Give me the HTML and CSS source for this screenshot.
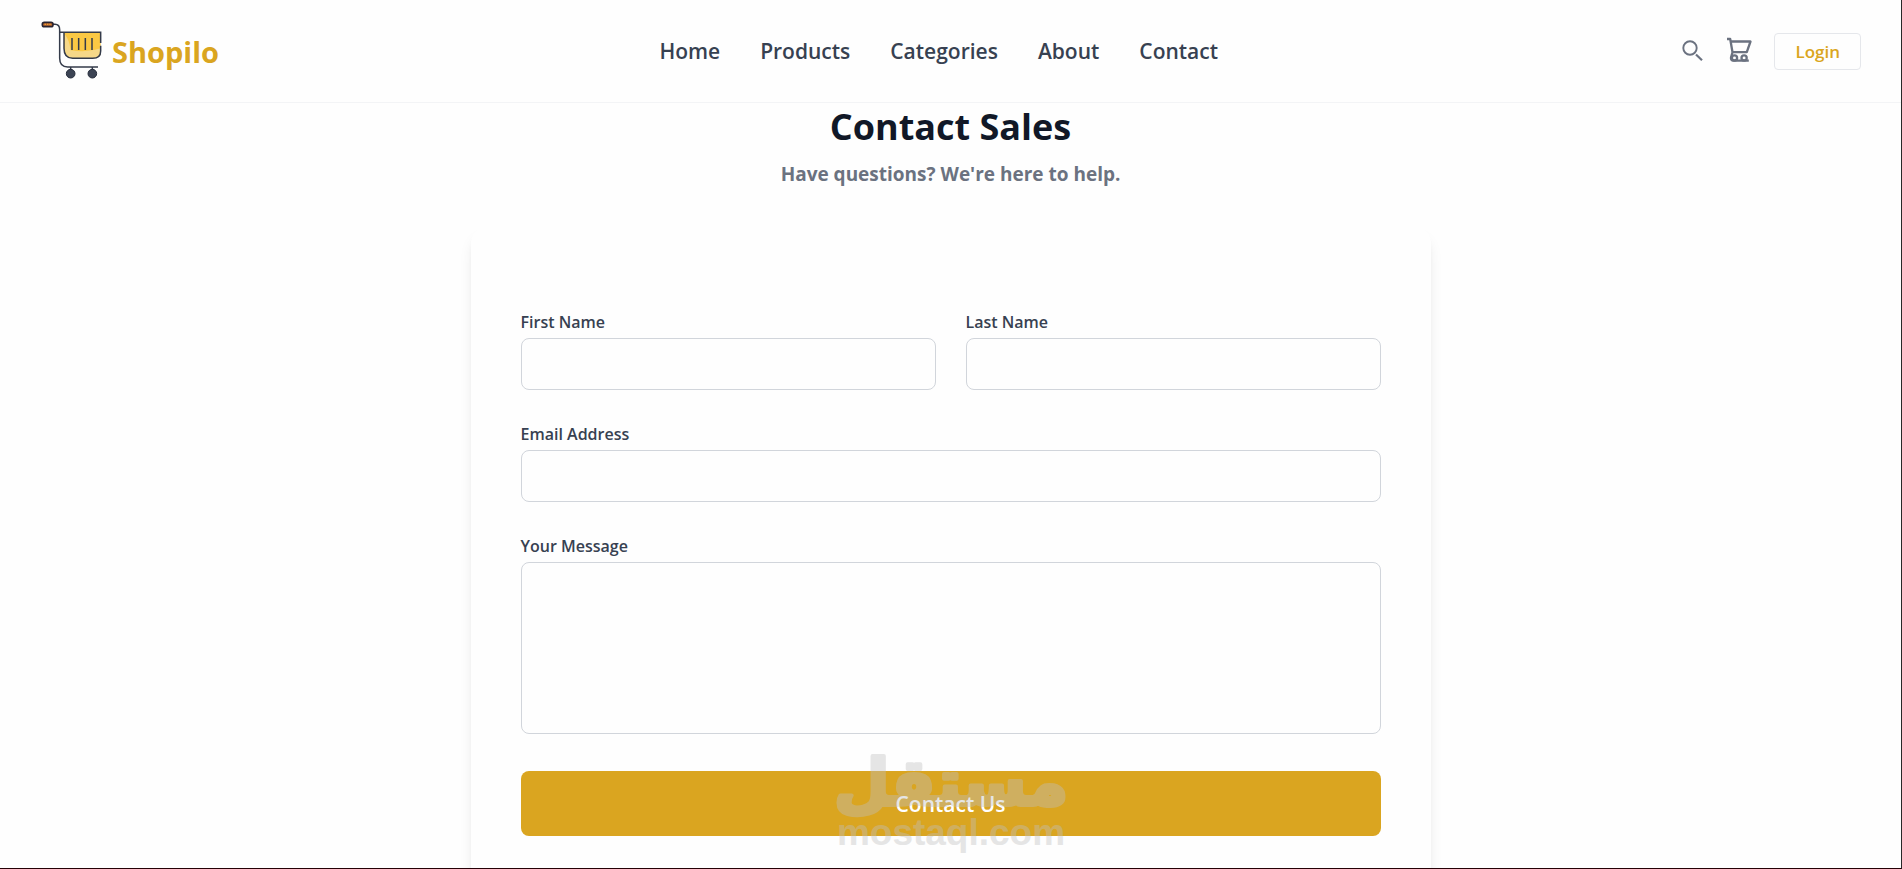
FILE: index.html
```html
<!DOCTYPE html>
<html lang="en">
<head>
<meta charset="utf-8">
<meta name="viewport" content="width=device-width, initial-scale=1">
<title>Shopilo - Contact Sales</title>
<link rel="stylesheet" href="styles.css">
</head>
<body>
<header class="header">
  <a class="brand" href="#">
    <svg class="brand-logo" viewBox="6 4 204 204" fill="none" aria-hidden="true">
      <path d="M78 50h110v58q0 20-22 20h-60q-28 0-28-32z" fill="#fac844"/>
      <path d="M80 56q14 16 18 48 50 8 90-6v12q0 18-22 18h-60q-26 0-26-32z" fill="#f6d888"/>
      <g stroke="#343b4a" stroke-width="4.500">
        <path d="M45 26h6q14 0 14 16v86q0 26 24 26h91"/>
        <path d="M65 50h123v32M188 90v16q0 22-24 22h-60q-26 0-26-30V50"/>
        <path d="M102 67v36M122 67v36M142 67v36M162 67v36"/>
        <path d="M98 154v12M163 154v12"/>
      </g>
      <rect x="13" y="20" width="32" height="13" rx="6" fill="#b8662f" stroke="#2a2430" stroke-width="5"/>
      <path d="M20 26h19" stroke="#f0a030" stroke-width="4" stroke-dasharray="4 3"/>
      <g fill="#3c4454" stroke="#262d3b" stroke-width="3">
        <circle cx="98" cy="174" r="13"/>
        <circle cx="163" cy="174" r="13"/>
      </g>
    </svg>
    <span class="brand-name">Shopilo</span>
  </a>
  <nav class="nav" aria-label="Main">
    <a href="#">Home</a>
    <a href="#">Products</a>
    <a href="#">Categories</a>
    <a href="#">About</a>
    <a href="#">Contact</a>
  </nav>
  <div class="actions">
    <button class="icon-button" type="button" aria-label="Search">
      <svg class="icon" viewBox="0 0 24 24" fill="none" stroke="currentColor" aria-hidden="true"><circle cx="12" cy="9" r="6.700" stroke-width="1.900"/><path d="M18 15.500l6 5.800" stroke-width="2.200"/></svg>
    </button>
    <button class="icon-button" type="button" aria-label="Cart">
      <svg class="icon" viewBox="0 0 24 24" fill="none" stroke="currentColor" stroke-width="2.300" stroke-linejoin="round" aria-hidden="true"><path d="M1 0h3.200l2.300 13.200h14.300l3.700-10.700H4.700M6.500 13.200l-1.500 5.300q-.4 3 2.500 3.200h15.300"/><circle cx="8.500" cy="18.900" r="2.600"/><circle cx="18.100" cy="18.900" r="2.600"/></svg>
    </button>
    <button class="login" type="button">Login</button>
  </div>
</header>
<main class="main">
  <h1 class="title">Contact Sales</h1>
  <p class="subtitle">Have questions? We're here to help.</p>
  <form class="card">
    <div class="field">
      <label for="first-name">First Name</label>
      <input id="first-name" type="text">
    </div>
    <div class="field">
      <label for="last-name">Last Name</label>
      <input id="last-name" type="text">
    </div>
    <div class="field wide">
      <label for="email">Email Address</label>
      <input id="email" type="email">
    </div>
    <div class="field wide">
      <label for="message">Your Message</label>
      <textarea id="message"></textarea>
    </div>
    <button class="submit wide" type="submit">Contact Us</button>
  </form>
</main>
<svg class="watermark" viewBox="0 0 240 112">
  <text class="mark-arabic" x="120" y="58" text-anchor="middle">مستقل</text>
  <text class="mark-latin" x="120" y="98" text-anchor="middle">mostaql.com</text>
</svg>
</body>
</html>
```
FILE: styles.css
```css
* { box-sizing: border-box; }
body {
  margin: 0;
  height: 100vh;
  overflow: hidden;
  background: #fefefe;
  border-right: 1px solid #292929;
  border-bottom: 1px solid #250006;
  color: #374151;
  font-family: "Open Sans", "Noto Sans", sans-serif;
}
a { color: inherit; text-decoration: none; }
button, input, textarea { font: inherit; }
.header {
  display: flex;
  align-items: center;
  justify-content: space-between;
  height: 103px;
  padding: 0 40px;
  border-bottom: 1px solid #f3f4f6;
}
.brand { display: flex; align-items: center; gap: 4px; color: #daa520; }
.brand-logo { width: 68px; height: 68px; }
.brand-name { font-size: 29px; font-weight: 700; }
.nav { display: flex; gap: 40px; font-size: 21px; font-weight: 600; }
.actions { display: flex; align-items: center; gap: 24px; padding-left: 20px; }
.icon-button { display: flex; padding: 0; border: 0; background: none; color: #6b7280; }
.icon { width: 24px; height: 24px; overflow: visible; }
.login {
  height: 37px;
  padding: 0 20px;
  border: 1px solid #e5e7eb;
  border-radius: 4px;
  background: transparent;
  color: #daa520;
  font-size: 17px;
  font-weight: 600;
}
.main { text-align: center; }
.title { margin: 0; color: #111827; font-size: 36px; font-weight: 700; line-height: 48px; }
.subtitle { margin: 8px 0 38px; color: #6b7280; font-size: 19px; font-weight: 700; line-height: 30px; }
.card {
  display: grid;
  grid-template-columns: 1fr 1fr;
  gap: 34px 30px;
  max-width: 960px;
  margin: 0 auto;
  padding: 85px 50px;
  border-radius: 16px;
  background: #fefefe;
  box-shadow: 0 10px 15px -3px rgba(0, 0, 0, 0.1), 0 4px 6px -4px rgba(0, 0, 0, 0.1);
  text-align: left;
}
.wide { grid-column: 1 / -1; }
.field { display: flex; flex-direction: column; gap: 6px; }
.field label { font-size: 16px; font-weight: 600; line-height: 20px; }
.field input, .field textarea {
  width: 100%;
  height: 52px;
  padding: 12px 16px;
  border: 1px solid #d1d5db;
  border-radius: 8px;
  background: transparent;
}
.field textarea { height: 172px; resize: none; }
.submit {
  height: 65px;
  margin-top: 3px;
  border: 0;
  border-radius: 8px;
  background: #daa520;
  color: #fff;
  font-size: 21px;
  font-weight: 600;
}
.watermark {
  position: absolute;
  left: 50%;
  bottom: 10px;
  width: 240px;
  height: 112px;
  margin-left: -120px;
  overflow: visible;
  opacity: 0.4;
  fill: #c0c0c0;
  stroke: #c0c0c0;
  stroke-linejoin: round;
  pointer-events: none;
}
.mark-arabic { font: 700 64px "DejaVu Sans", sans-serif; stroke-width: 4; }
.mark-latin { font: 700 37px "Liberation Sans", sans-serif; stroke-width: 0; }
```
